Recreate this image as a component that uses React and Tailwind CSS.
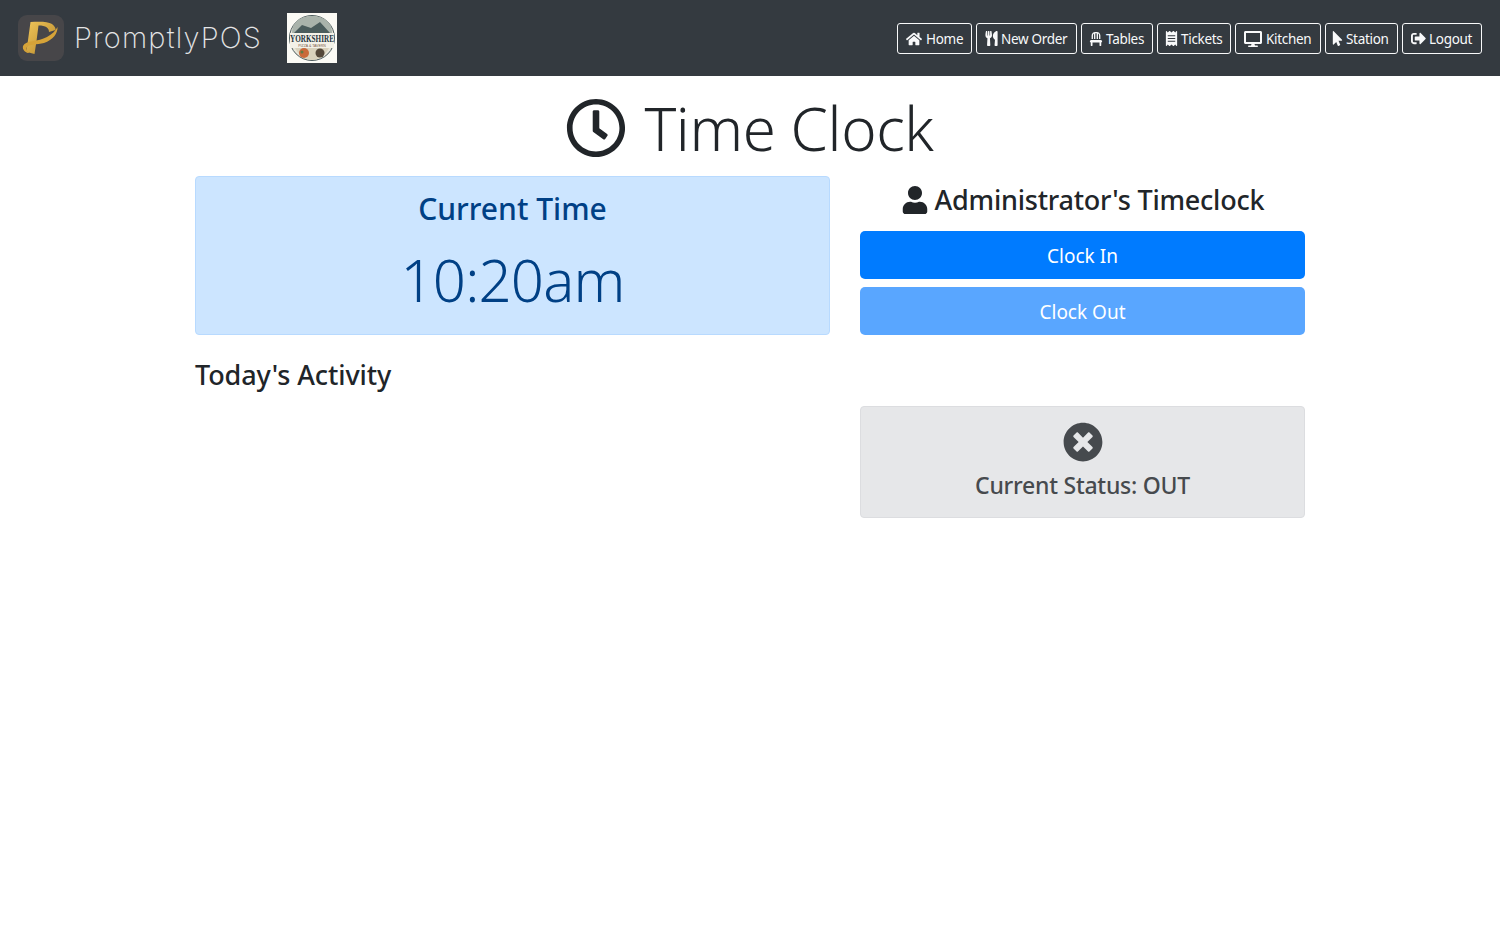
import React from 'react'
import { FaHome, FaUtensils, FaChair, FaReceipt, FaDesktop, FaMousePointer, FaSignOutAlt, FaRegClock, FaUser, FaTimesCircle } from 'react-icons/fa'

const NAV = [
  { label: 'Home', icon: FaHome, w: 'w-[75px]', box: 'w-[21px]', iw: 'text-[16px] ml-[1px]' },
  { label: 'New Order', icon: FaUtensils, w: 'w-[101px]', box: 'w-[17px]', iw: 'text-[15px]' },
  { label: 'Tables', icon: FaChair, w: 'w-[72px]', box: 'w-[17px]', iw: 'text-[14px]' },
  { label: 'Tickets', icon: FaReceipt, w: 'w-[74px]', box: 'w-[16px]', iw: 'text-[15px] -ml-[1px]' },
  { label: 'Kitchen', icon: FaDesktop, w: 'w-[86px]', box: 'w-[23px]', iw: 'text-[18px] ml-[1px]' },
  { label: 'Station', icon: FaMousePointer, w: 'w-[73px]', box: 'w-[13px]', iw: 'text-[15px] -ml-[3px]' },
  { label: 'Logout', icon: FaSignOutAlt, w: 'w-[80px]', box: 'w-[19px]', iw: 'text-[15px] ml-[1px]' },
]

function PromptlyLogo() {
  return (
    <svg width="46" height="46" viewBox="0 0 46 46">
      <defs>
        <linearGradient id="gold" x1="0" y1="0" x2="1" y2="1">
          <stop offset="0" stopColor="#f0c65a" />
          <stop offset="1" stopColor="#b58629" />
        </linearGradient>
      </defs>
      <rect width="46" height="46" rx="9" fill="#474649" />
      <path d="M12.500 7 C22 6.500 30 6.500 34 9 C37 11 38 14 37.500 15 L31 17 C31 13 28 10.500 20.500 10.500 L18.500 26 L16.500 39 C12.500 38 9 37 8.500 36 Z" fill="url(#gold)" />
      <path d="M5 31 C8 25 20 27 29 22 C34 19 37.500 16 39.500 12 C40 18 35 25 26 28 C19 30 11 29 9 32 C8 34 9 37 12 38 C8 38.500 4 35 5 31 Z" fill="#d6a338" />
    </svg>
  )
}

function YorkshireLogo() {
  return (
    <div className="w-[50px] h-[50px] bg-[#fbfaf5] flex items-center justify-center shrink-0">
      <svg width="50" height="50" viewBox="0 0 50 50">
        <circle cx="25" cy="25" r="22.500" fill="#e9e6da" stroke="#4b5a5c" strokeWidth="1" />
        <path d="M5 20 C5 8 15 3 25 3 C35 3 45 8 45 20 Z" fill="#a9b3ab" />
        <path d="M7 20 L15 12 L24 15 L33 9 L43 20 Z" fill="#4a5c5c" />
        <path d="M8 35 H42 C38 43 31 47 25 47 C19 47 12 43 8 35 Z" fill="#d9d2bd" />
        <circle cx="17" cy="40" r="5" fill="#c9693a" />
        <circle cx="15" cy="39" r="1.500" fill="#5f7a45" />
        <circle cx="33" cy="40" r="4.500" fill="#54483a" />
        <rect x="3" y="20" width="44" height="15" fill="#f3f1e8" />
        <text transform="translate(25 29) scale(0.72 1)" textAnchor="middle" fontFamily="'Liberation Serif', serif" fontWeight="700" fontSize="10" fill="#24343c">YORKSHIRE</text>
        <text x="25" y="33.500" textAnchor="middle" fontFamily="'Liberation Sans', sans-serif" fontSize="3.500" fill="#7c5b45">PIZZA &amp; TAVERN</text>
      </svg>
    </div>
  )
}

export default function App() {
  return (
    <div className="min-h-[950px] bg-white text-[#212529] font-['Noto_Sans','Open_Sans',sans-serif]">
      <nav className="h-[76px] bg-[#343a40] flex items-center justify-between pl-[18px] pr-[18px]">
        <div className="flex items-center">
          <PromptlyLogo />
          <span className="ml-[10px] w-[187px] text-[29px] leading-none font-extralight text-[#e4e5e6] font-['Inter',sans-serif] tracking-[1.200px] whitespace-nowrap -mt-[2px]">PromptlyPOS</span>
          <div className="ml-[26px]">
            <YorkshireLogo />
          </div>
        </div>
        <div className="flex items-center gap-1 mt-[1px]">
          {NAV.map(({ label, icon: Icon, w, box, iw }) => (
            <a key={label} className={`${w} h-[31px] flex items-center pl-[7px] border border-[#f8f9fa] rounded-[3px] text-[#f8f9fa] text-[13.500px] tracking-[-0.3px] whitespace-nowrap`}>
              <span className={`${box} shrink-0`}>
                <Icon className={iw} />
              </span>
              <span className="pt-[2px]">{label}</span>
            </a>
          ))}
        </div>
      </nav>

      <main className="w-[1110px] mx-auto">
        <h1 className="h-[100px] flex items-center justify-center gap-[18px] text-[60px] font-light leading-none pt-[4px]">
          <FaRegClock className="text-[60px]" />
          <span className="tracking-[-0.400px]">Time Clock</span>
        </h1>

        <div className="grid grid-cols-[635px_445px] gap-x-[30px]">
          <div>
            <div className="h-[159px] bg-[#cce5ff] border border-[#b8daff] rounded-[4px] text-[#004085] text-center pt-[12px]">
              <h3 className="text-[30px] leading-[40px] font-medium">Current Time</h3>
              <div className="mt-[18px] text-[58px] leading-[66px] font-light tracking-[-0.800px]">10:20am</div>
            </div>
            <h4 className="mt-[24px] text-[27px] leading-[32px] font-medium tracking-[-0.100px]">Today's Activity</h4>
          </div>

          <div>
            <h4 className="h-[48px] flex items-center justify-center gap-[6px] text-[27px] font-medium tracking-[-0.220px]">
              <FaUser className="text-[28px] -mt-[1px]" />
              <span>Administrator's Timeclock</span>
            </h4>
            <button className="block w-full h-[48px] mt-[7px] pt-[2px] bg-[#007bff] text-white text-[19px] rounded-[5px]">Clock In</button>
            <button className="block w-full h-[48px] mt-[8px] pt-[2px] bg-[#59a6ff] text-white text-[19px] rounded-[5px]">Clock Out</button>
            <div className="mt-[71px] h-[112px] bg-[#e6e7e9] border border-[#dcdde0] rounded-[4px] flex flex-col items-center text-[#464a4e] pt-[15px]">
              <FaTimesCircle className="text-[40px]" />
              <div className="mt-[7px] text-[23px] leading-[32px] font-medium tracking-[-0.250px]">Current Status: OUT</div>
            </div>
          </div>
        </div>
      </main>
    </div>
  )
}
